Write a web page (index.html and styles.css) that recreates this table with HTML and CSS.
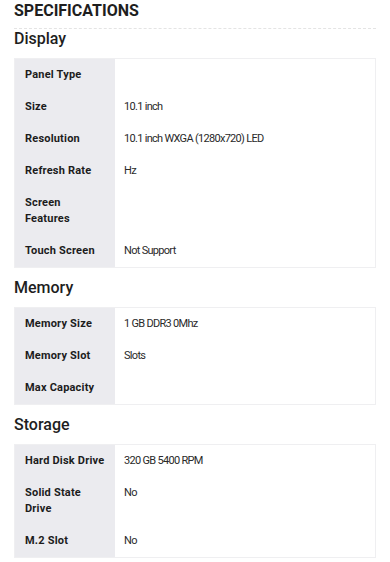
FILE: index.html
```html
<!DOCTYPE html>
<html>
<head>
  <meta charset="utf-8">
  <link rel="stylesheet" href="styles.css">
</head>
<body>
  <div class="specs">
    <h2 class="specs-title">SPECIFICATIONS</h2>

    <!-- Display -->
    <h3 class="group-title">Display</h3>
    <table class="spec-table">
      <tr><th>Panel Type</th><td></td></tr>
      <tr><th>Size</th><td>10.1 inch</td></tr>
      <tr><th>Resolution</th><td>10.1 inch WXGA (1280x720) LED</td></tr>
      <tr><th>Refresh Rate</th><td>Hz</td></tr>
      <tr><th>Screen Features</th><td></td></tr>
      <tr><th>Touch Screen</th><td>Not Support</td></tr>
    </table>

    <!-- Memory -->
    <h3 class="group-title">Memory</h3>
    <table class="spec-table">
      <tr><th>Memory Size</th><td>1 GB DDR3 0Mhz</td></tr>
      <tr><th>Memory Slot</th><td>Slots</td></tr>
      <tr><th>Max Capacity</th><td></td></tr>
    </table>

    <!-- Storage -->
    <h3 class="group-title">Storage</h3>
    <table class="spec-table">
      <tr><th>Hard Disk Drive</th><td>320 GB 5400 RPM</td></tr>
      <tr><th>Solid State Drive</th><td>No</td></tr>
      <tr><th>M.2 Slot</th><td>No</td></tr>
    </table>
  </div>
</body>
</html>
```

FILE: styles.css
```css
/* Main Element Styles */
body {
  margin: 0;
  background-color: #fff;
  font-family: Roboto, "Liberation Sans", sans-serif;
  color: #222;
}
.specs {
  padding: 0 14px;
}
.specs-title {
  margin: 0;
  padding: 1px 0 8px;
  font-size: 16px;
  font-weight: 700;
  line-height: 19px;
  color: #1e1e1e;
  border-bottom: 1px dashed #e4e4e4;
}

/* Group Styles */
.group-title {
  margin: 0;
  padding: 0 0 9px;
  font-size: 16px;
  font-weight: 500;
  line-height: 20px;
  color: #1e1e1e;
}
.spec-table {
  width: 100%;
  border-collapse: collapse;
  border: 1px solid #efeff1;
  margin-bottom: 10px;
}
.spec-table th,
.spec-table td {
  padding: 8px 9px 8px 10px;
  font-size: 11px;
  line-height: 16px;
  text-align: left;
  vertical-align: top;
}
.spec-table th {
  width: 81px;
  background-color: #ebebef;
  font-weight: 700;
  letter-spacing: 0.2px;
  color: #1c1c1c;
}
.spec-table td {
  padding-left: 9px;
  background-color: #fff;
  font-weight: 400;
  letter-spacing: -0.7px;
  color: #2a2a2a;
}
```
